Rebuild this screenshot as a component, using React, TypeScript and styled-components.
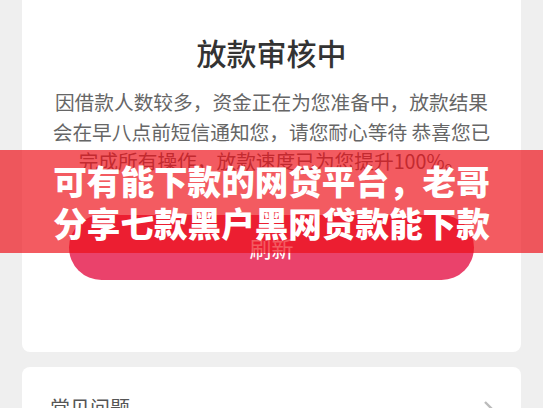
import React from 'react'
import styled, { createGlobalStyle } from 'styled-components'

const GlobalStyle = createGlobalStyle`
  html, body {
    margin: 0;
    padding: 0;
    background: #efefef;
    font-family: 'Noto Sans CJK SC', 'Noto Sans', sans-serif;
  }
`

const Page = styled.div`
  position: relative;
  width: 543px;
  height: 408px;
  overflow: hidden;
  background: #efefef;
  padding: 0 22px;
  box-sizing: border-box;
  display: flex;
  flex-direction: column;
  gap: 15px;
`

const Card = styled.div<{ flat?: boolean }>`
  background: #ffffff;
  border-radius: ${({ flat }) => (flat ? '0 0 8px 8px' : '8px')};
  flex-shrink: 0;
`

const StatusCard = styled(Card)`
  display: flex;
  flex-direction: column;
  align-items: center;
  padding: 31px 0 72px;
`

const Title = styled.h1`
  margin: 0;
  font-size: 30px;
  line-height: 42px;
  font-weight: 500;
  color: #333333;
`

const Notice = styled.p`
  margin: 14px 0 0;
  width: 445px;
  font-size: 19.7px;
  line-height: 29.5px;
  color: #666666;
  text-align: center;
`

const RefreshButton = styled.button`
  margin-top: 39px;
  width: 405px;
  height: 65px;
  border: none;
  border-radius: 33px;
  background: #ea426b;
  color: #ffffff;
  font-family: inherit;
  font-size: 22px;
  cursor: pointer;
`

const FaqCard = styled(Card)`
  display: flex;
  align-items: center;
  justify-content: space-between;
  padding: 26px 24px 26px 28px;
`

const FaqLabel = styled.span`
  font-size: 20px;
  line-height: 30px;
  color: #555555;
`

const Chevron = styled.svg`
  width: 14px;
  height: 22px;
  margin-top: 6px;
`

const Banner = styled.div`
  position: absolute;
  left: 0;
  right: 0;
  top: 150px;
  height: 103px;
  background: rgba(237, 13, 22, 0.68);
  display: flex;
  align-items: center;
  justify-content: center;
`

const BannerText = styled.div`
  width: 445px;
  font-size: 33.6px;
  line-height: 42px;
  font-weight: 900;
  color: #ffffff;
  text-align: center;
  letter-spacing: 0;
`

export default function App() {
  return (
    <>
      <GlobalStyle />
      <Page>
        <StatusCard flat>
          <Title>放款审核中</Title>
          <Notice>
            因借款人数较多，资金正在为您准备中，放款结果会在早八点前短信通知您，请您耐心等待 恭喜您已完成所有操作，放款速度已为您提升100%。
          </Notice>
          <RefreshButton>刷新</RefreshButton>
        </StatusCard>
        <FaqCard>
          <FaqLabel>常见问题</FaqLabel>
          <Chevron viewBox="0 0 14 22">
            <path d="M2 2 L11 11 L2 20" fill="none" stroke="#bbbbbb" strokeWidth="2.4" />
          </Chevron>
        </FaqCard>
        <Banner>
          <BannerText>可有能下款的网贷平台，老哥分享七款黑户黑网贷款能下款</BannerText>
        </Banner>
      </Page>
    </>
  )
}
